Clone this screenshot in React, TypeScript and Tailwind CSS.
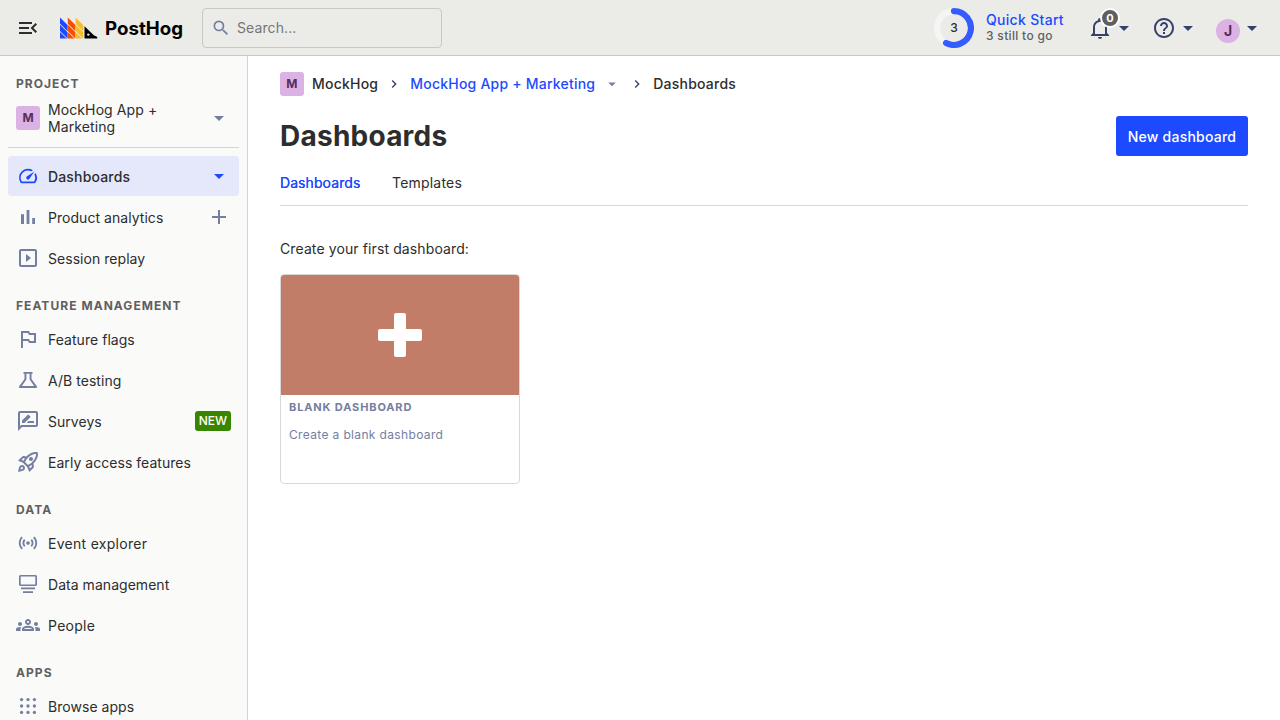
import type { ReactNode } from 'react';
import {
  MdMenuOpen,
  MdSearch,
  MdArrowDropDown,
  MdOutlineSlideshow,
  MdOutlinedFlag,
  MdOutlineRateReview,
  MdOutlineRocketLaunch,
  MdSensors,
  MdOutlineGroups,
  MdHelpOutline,
  MdChevronRight,
  MdAdd,
} from 'react-icons/md';

function Svg({ children, className = 'size-6' }: { children: ReactNode; className?: string }) {
  return (
    <svg viewBox="0 0 24 24" fill="currentColor" className={className}>
      {children}
    </svg>
  );
}

const GaugeIcon = () => (
  <Svg>
    <g transform="translate(1.2 1.2) scale(.9)">
      <path d="m20.38 8.57-1.23 1.85a8 8 0 0 1-.22 7.58H5.07A8 8 0 0 1 15.58 6.85l1.85-1.23A10 10 0 0 0 3.35 19a2 2 0 0 0 1.72 1h13.85a2 2 0 0 0 1.74-1 10 10 0 0 0-.27-10.44z" />
      <path d="M10.59 15.41a2 2 0 0 0 2.83 0l5.66-8.49-8.49 5.66a2 2 0 0 0 0 2.83z" />
    </g>
  </Svg>
);

const BarsIcon = () => (
  <Svg>
    <path d="M5 9.2h3V19H5zM10.6 5h2.8v14h-2.8zm5.6 8H19v6h-2.8z" />
  </Svg>
);

const BellIcon = () => (
  <Svg>
    <path d="M10 21H14C14 22.1 13.1 23 12 23S10 22.1 10 21M21 19V20H3V19L5 17V11C5 7.900 7 5.200 10 4.300V4C10 2.900 10.900 2 12 2S14 2.900 14 4V4.300C17 5.200 19 7.900 19 11V17L21 19M17 11C17 8.200 14.800 6 12 6S7 8.200 7 11V18H17V11Z" />
  </Svg>
);

const FlaskIcon = () => (
  <Svg>
    <path d="M7.500 3.900h9v1.800h-1v5.200l5.500 7.700c.3.700 0 1.500-.8 1.500H3.800c-.8 0-1.100-.8-.8-1.500l5.500-7.700V5.700h-1zm2.900 1.800v5.900L5.900 18.100h12.200l-4.500-6.500V5.700z" />
  </Svg>
);

const DataIcon = () => (
  <Svg>
    <path
      fillRule="evenodd"
      d="M4.500 3h15A1.500 1.500 0 0 1 21 4.500v8a1.500 1.500 0 0 1-1.500 1.500h-15A1.500 1.500 0 0 1 3 12.500v-8A1.500 1.500 0 0 1 4.500 3zm.2 1.600v7.800h14.600V4.600z"
    />
    <path d="M5 15.600h14v1.700H5zM7 19.200h10v1.700H7z" />
  </Svg>
);

const AppsIcon = () => (
  <Svg>
    {[5.6, 12, 18.4].map((y) =>
      [5.6, 12, 18.4].map((x) => <circle key={`${x}-${y}`} cx={x} cy={y} r="1.65" />),
    )}
  </Svg>
);

const QUILLS = [
  { x: 0, color: '#1d4aff' },
  { x: 7.8, color: '#f54e00' },
  { x: 15.6, color: '#f9bd2b' },
];

function Logo() {
  return (
    <svg width="128" height="26" viewBox="0 0 128 26" className="block">
      <clipPath id="quills">
        <rect width="24" height="23.500" />
      </clipPath>
      <g clipPath="url(#quills)">
        {QUILLS.map(({ x, color }) => (
          <g key={x} transform={`translate(${x} 0)`} fill={color}>
            <path d="M0 2.500 7.600 10v6.200L0 8.700z" />
            <path d="M0 9.700 7.600 17.200v6.200L0 15.900z" />
            <path d="M0 16.900 7.600 24.400H0z" />
          </g>
        ))}
      </g>
      <path d="M24.500 11.200 33.800 20.300c1 .7 3.500 1 3.500 2.200v1H24.500z" />
      <circle cx="28.300" cy="19.600" r="1.200" fill="#ebece8" />
      <text
        x="45"
        y="20"
        textLength="78"
        lengthAdjust="spacingAndGlyphs"
        className="font-['Inter'] text-[18.500px] font-bold"
      >
        PostHog
      </text>
    </svg>
  );
}

function NavItem({
  icon,
  label,
  active,
  wide,
  side,
}: {
  icon: ReactNode;
  label: string;
  active?: boolean;
  wide?: boolean;
  side?: ReactNode;
}) {
  return (
    <li
      className={`flex h-10 shrink-0 items-center rounded px-2 ${active ? 'bg-[#e4e8fa] font-medium text-[#1d4aff]' : 'text-[#747ea1]'}`}
    >
      <span className="flex size-6 shrink-0 items-center justify-center">{icon}</span>
      <span
        className={`ml-2 flex-1 pt-0.5 text-sm text-[#2d2d2d] ${wide ? 'tracking-[0.28px]' : active ? 'tracking-[0.16px]' : 'tracking-[0.04px]'}`}
      >
        {label}
      </span>
      {side}
    </li>
  );
}

function Heading({ children }: { children: ReactNode }) {
  return (
    <h5 className="mt-[19px] mb-[5px] h-[17px] shrink-0 px-2 text-xs leading-[17px] font-bold tracking-[1.05px] text-[#5f5f5f] uppercase">
      {children}
    </h5>
  );
}

function Lettermark() {
  return (
    <span className="flex size-6 shrink-0 items-center justify-center rounded-[3px] bg-[#dcb1e3] text-xs font-bold text-[#572e5e]">
      M
    </span>
  );
}

function TopBar() {
  return (
    <header className="flex h-14 shrink-0 items-center border-b border-[#c7c8c5] bg-[#ebece8] px-4">
      <MdMenuOpen className="size-6 text-[#2d2d2d]" />
      <div className="ml-5">
        <Logo />
      </div>
      <div className="ml-3.5 flex h-10 w-60 items-center rounded border border-[#c7c8c5] px-2">
        <MdSearch className="size-5 text-[#747ea1]" />
        <span className="ml-1.5 text-sm tracking-[0.1px] text-[#757575]">Search...</span>
      </div>
      <div className="ml-auto flex items-center">
        <div className="grid size-10 place-items-center">
          <svg viewBox="0 0 40 40" className="col-start-1 row-start-1 size-10" fill="none" strokeWidth="6.200">
            <circle cx="20" cy="20" r="16.900" stroke="#f5f5f3" />
            <path d="M20 3.100A16.900 16.900 0 1 1 12.100 34.940" stroke="#345cff" strokeLinecap="round" />
          </svg>
          <span className="col-start-1 row-start-1 text-xs font-medium text-[#2d2d2d]">3</span>
        </div>
        <div className="ml-3 w-[102px] font-medium">
          <div className="text-sm leading-4 tracking-[0.3px] text-[#1d4aff]">Quick Start</div>
          <div className="text-xs leading-4 tracking-[0.32px] text-[#5f5f5f]">3 still to go</div>
        </div>
        <div className="relative flex items-center text-[#35416b]">
          <BellIcon />
          <MdArrowDropDown className="size-6" />
          <span className="absolute top-[-8px] left-3 flex size-5 items-center justify-center rounded-full border-2 border-white bg-[#5f5f5f] pt-px text-[11px] font-bold text-white">
            0
          </span>
        </div>
        <div className="ml-4 flex items-center text-[#35416b]">
          <MdHelpOutline className="size-6" />
          <MdArrowDropDown className="size-6" />
        </div>
        <div className="ml-4 flex items-center text-[#35416b]">
          <span className="mt-1.5 flex size-6 items-center justify-center rounded-full bg-[#dcb1e3] text-sm font-bold text-[#572e5e]">
            J
          </span>
          <MdArrowDropDown className="size-6" />
        </div>
      </div>
    </header>
  );
}

function Sidebar() {
  return (
    <nav className="flex w-62 shrink-0 flex-col overflow-hidden border-r border-[#d4d4d4] bg-[#fafaf9] px-2">
      <Heading>Project</Heading>
      <div className="flex h-[51px] shrink-0 items-center border-b border-[#d5d5d4] px-2 pb-[9px]">
        <Lettermark />
        <span className="ml-2 w-40 pt-px text-sm leading-[17px] tracking-[0.1px] text-[#2d2d2d]">
          MockHog App +<br />
          Marketing
        </span>
        <MdArrowDropDown className="-ml-[1px] size-6 text-[#747ea1]" />
      </div>
      <ul className="mt-2 flex flex-col gap-px">
        <NavItem
          icon={<GaugeIcon />}
          label="Dashboards"
          active
          side={<MdArrowDropDown className="size-6" />}
        />
        <NavItem icon={<BarsIcon />} label="Product analytics" side={<MdAdd className="size-6" />} />
        <NavItem icon={<MdOutlineSlideshow className="size-6" />} label="Session replay" />
      </ul>
      <Heading>Feature management</Heading>
      <ul className="flex flex-col gap-px">
        <NavItem icon={<MdOutlinedFlag className="size-6" />} label="Feature flags" />
        <NavItem icon={<FlaskIcon />} label="A/B testing" />
        <NavItem
          icon={<MdOutlineRateReview className="size-6" />}
          label="Surveys"
          side={
            <span className="flex h-5 items-center rounded-[3px] bg-[#388600] px-1 text-xs font-medium text-white">
              NEW
            </span>
          }
        />
        <NavItem icon={<MdOutlineRocketLaunch className="size-6" />} label="Early access features" />
      </ul>
      <Heading>Data</Heading>
      <ul className="flex flex-col gap-px">
        <NavItem icon={<MdSensors className="size-[22px]" />} label="Event explorer" wide />
        <NavItem icon={<DataIcon />} label="Data management" />
        <NavItem icon={<MdOutlineGroups className="size-6" />} label="People" wide />
      </ul>
      <Heading>Apps</Heading>
      <ul>
        <NavItem icon={<AppsIcon />} label="Browse apps" />
      </ul>
    </nav>
  );
}

function Main() {
  return (
    <main className="flex-1 px-8 pt-4 text-[#2d2d2d]">
      <div className="flex h-6 items-center text-sm font-medium tracking-[0.22px]">
        <Lettermark />
        <span className="ml-2">MockHog</span>
        <MdChevronRight className="mx-2 size-4 text-[#35416b]" />
        <span className="text-[#1d4aff]">MockHog App + Marketing</span>
        <MdArrowDropDown className="ml-2 size-[18px] text-[#747ea1]" />
        <MdChevronRight className="mx-2 size-4 text-[#35416b]" />
        <span>Dashboards</span>
      </div>
      <div className="mt-5 flex h-10 items-center justify-between">
        <h1 className="text-[28px] leading-10 font-bold tracking-[0.24px]">Dashboards</h1>
        <button className="h-10 w-33 rounded-[3px] bg-[#1d4aff] pt-0.5 text-sm font-medium tracking-[0.23px] text-white">
          New dashboard
        </button>
      </div>
      <div className="flex h-[50px] gap-8 border-b border-[#d9d9d9] pt-[17px] text-sm">
        <span className="w-20 tracking-[0.08px] text-[#1d4aff] [text-shadow:0_0_0.25px_#1d4aff]">
          Dashboards
        </span>
        <span className="tracking-[0.2px]">Templates</span>
      </div>
      <p className="mt-8 text-sm leading-[22px] tracking-[0.11px]">Create your first dashboard:</p>
      <div className="mt-3.5 flex h-[210px] w-60 flex-col overflow-hidden rounded border border-[#d9d9d9] text-[#747ea1]">
        <div className="flex h-[120px] items-center justify-center bg-[#c17d68]">
          <svg viewBox="0 0 44 44" className="size-11" fill="white">
            <rect x="16" width="12" height="44" rx="2" />
            <rect y="16" width="44" height="12" rx="2" />
          </svg>
        </div>
        <h5 className="mt-1 px-2 text-[11px] leading-[17px] font-bold tracking-[0.87px] uppercase">
          Blank dashboard
        </h5>
        <p className="mt-2.5 px-2 text-xs leading-[18px] tracking-[0.35px]">Create a blank dashboard</p>
      </div>
    </main>
  );
}

export default function App() {
  return (
    <div className="flex h-screen flex-col overflow-hidden bg-white font-['Inter',sans-serif]">
      <TopBar />
      <div className="flex min-h-0 flex-1">
        <Sidebar />
        <Main />
      </div>
    </div>
  );
}
